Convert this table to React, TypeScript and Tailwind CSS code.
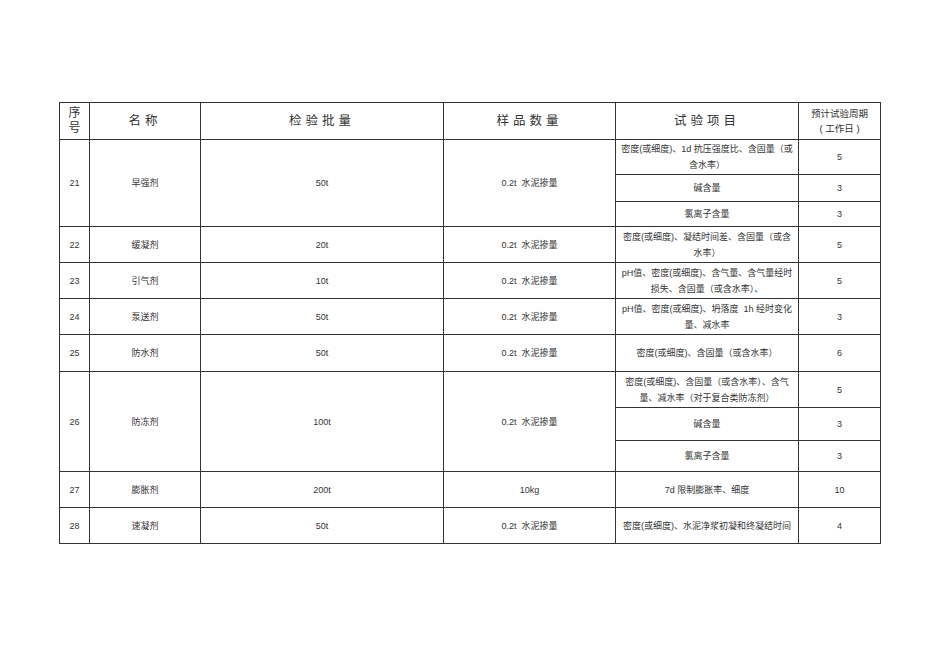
const font = {
  fontFamily: '"Liberation Sans", "Noto Sans CJK SC", sans-serif',
};

type Sub = { item: string[]; days: string; h: string };
type Row = { no: string; name: string; batch: string; sample: string; subs: Sub[] };

const rows: Row[] = [
  {
    no: "21",
    name: "早强剂",
    batch: "50t",
    sample: "0.2t  水泥掺量",
    subs: [
      { item: ["密度(或细度)、1d 抗压强度比、含固量（或", "含水率）"], days: "5", h: "h-[35px]" },
      { item: ["碱含量"], days: "3", h: "h-[27px]" },
      { item: ["氯离子含量"], days: "3", h: "h-[25px]" },
    ],
  },
  {
    no: "22",
    name: "缓凝剂",
    batch: "20t",
    sample: "0.2t  水泥掺量",
    subs: [{ item: ["密度(或细度)、凝结时间差、含固量（或含", "水率）"], days: "5", h: "h-[36px]" }],
  },
  {
    no: "23",
    name: "引气剂",
    batch: "10t",
    sample: "0.2t  水泥掺量",
    subs: [{ item: ["pH值、密度(或细度)、含气量、含气量经时", "损失、含固量（或含水率）、"], days: "5", h: "h-[36px]" }],
  },
  {
    no: "24",
    name: "泵送剂",
    batch: "50t",
    sample: "0.2t  水泥掺量",
    subs: [{ item: ["pH值、密度(或细度)、坍落度  1h 经时变化", "量、减水率"], days: "3", h: "h-[36px]" }],
  },
  {
    no: "25",
    name: "防水剂",
    batch: "50t",
    sample: "0.2t  水泥掺量",
    subs: [{ item: ["密度(或细度)、含固量（或含水率）"], days: "6", h: "h-[37px]" }],
  },
  {
    no: "26",
    name: "防冻剂",
    batch: "100t",
    sample: "0.2t  水泥掺量",
    subs: [
      { item: ["密度(或细度)、含固量（或含水率）、含气", "量、减水率（对于复合类防冻剂）"], days: "5", h: "h-[36px]" },
      { item: ["碱含量"], days: "3", h: "h-[33px]" },
      { item: ["氯离子含量"], days: "3", h: "h-[31px]" },
    ],
  },
  {
    no: "27",
    name: "膨胀剂",
    batch: "200t",
    sample: "10kg",
    subs: [{ item: ["7d 限制膨胀率、细度"], days: "10", h: "h-[36px]" }],
  },
  {
    no: "28",
    name: "速凝剂",
    batch: "50t",
    sample: "0.2t  水泥掺量",
    subs: [{ item: ["密度(或细度)、水泥净浆初凝和终凝结时间"], days: "4", h: "h-[36px]" }],
  },
];

const cell = "border border-[#333] text-center align-middle p-0";

export default function App() {
  return (
    <div className="w-[950px] h-[672px] bg-white pt-[102px] pl-[59px]" style={font}>
      <table className="table-fixed border-collapse w-[822px] text-[#333]">
        <colgroup>
          <col className="w-[30px]" />
          <col className="w-[111px]" />
          <col className="w-[243px]" />
          <col className="w-[172px]" />
          <col className="w-[183px]" />
          <col className="w-[82px]" />
        </colgroup>
        <thead>
          <tr className="h-[37px]">
            <th className={`${cell} font-normal text-[12px] leading-[15px]`}>
              序<br />号
            </th>
            <th className={`${cell} font-normal text-[12.5px] tracking-[4px]`}>名称</th>
            <th className={`${cell} font-normal text-[12.5px] tracking-[4px]`}>检验批量</th>
            <th className={`${cell} font-normal text-[12.5px] tracking-[4px]`}>样品数量</th>
            <th className={`${cell} font-normal text-[12.5px] tracking-[4px]`}>试验项目</th>
            <th className={`${cell} font-normal text-[9.5px] leading-[15px]`}>
              预计试验周期
              <br />
              ( 工作日 )
            </th>
          </tr>
        </thead>
        <tbody className="text-[9px] leading-[16px]">
          {rows.map((r) =>
            r.subs.map((s, i) => (
              <tr key={r.no + "-" + i} className={s.h}>
                {i === 0 && (
                  <>
                    <td rowSpan={r.subs.length} className={cell}>
                      {r.no}
                    </td>
                    <td rowSpan={r.subs.length} className={cell}>
                      {r.name}
                    </td>
                    <td rowSpan={r.subs.length} className={cell}>
                      {r.batch}
                    </td>
                    <td rowSpan={r.subs.length} className={`${cell} whitespace-pre`}>
                      {r.sample}
                    </td>
                  </>
                )}
                <td className={`${cell} whitespace-pre`}>
                  {s.item.map((line, j) => (
                    <div key={j}>{line}</div>
                  ))}
                </td>
                <td className={cell}>{s.days}</td>
              </tr>
            ))
          )}
        </tbody>
      </table>
    </div>
  );
}
